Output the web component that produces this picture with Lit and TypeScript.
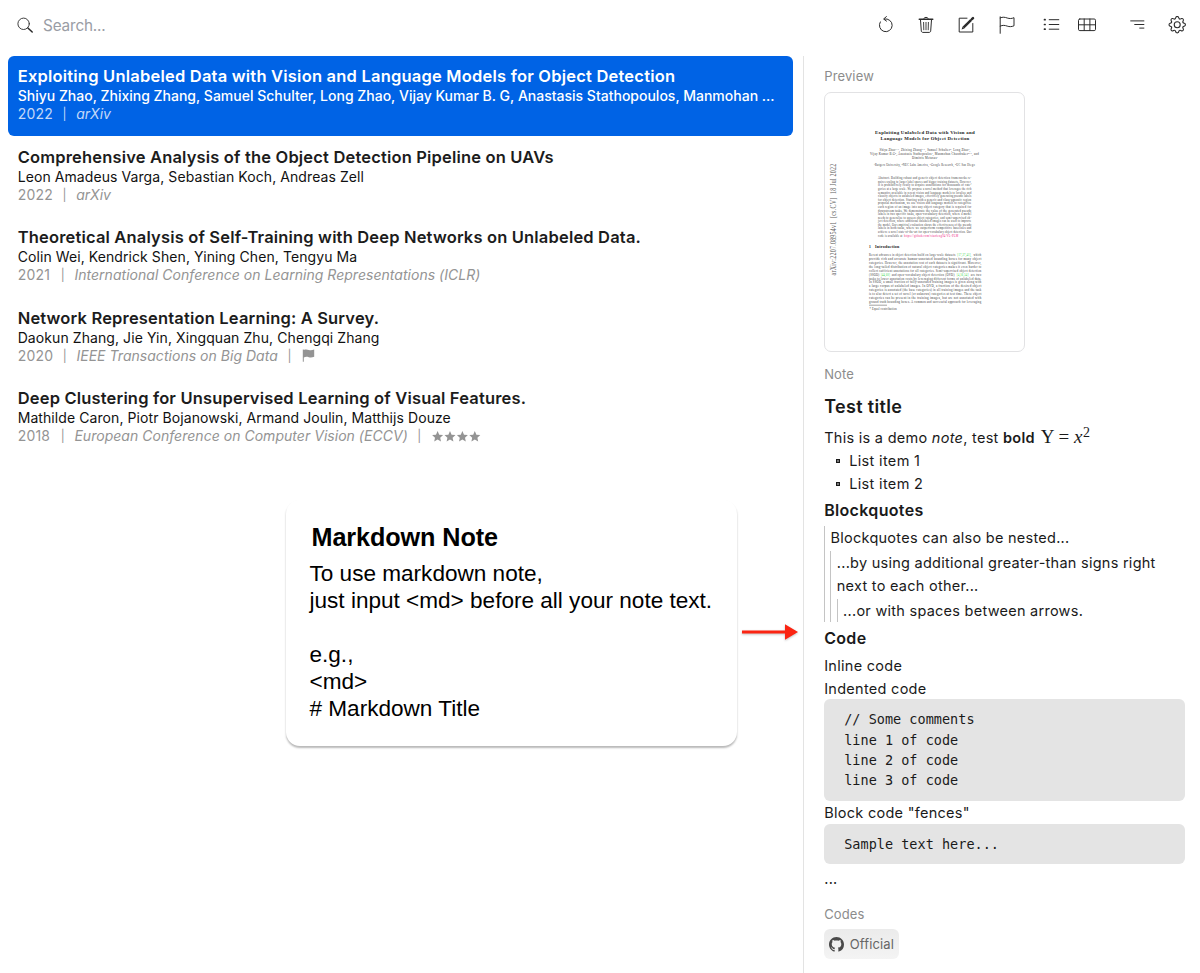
import { LitElement, html, css, svg, nothing } from "lit";
import { customElement, property } from "lit/decorators.js";
import { classMap } from "lit/directives/class-map.js";

interface Paper {
  title: string;
  authors: string;
  year: string;
  venue: string;
  flag?: boolean;
  stars?: number;
  selected?: boolean;
}

const papers: Paper[] = [
  {
    title: "Exploiting Unlabeled Data with Vision and Language Models for Object Detection",
    authors: "Shiyu Zhao, Zhixing Zhang, Samuel Schulter, Long Zhao, Vijay Kumar B. G, Anastasis Stathopoulos, Manmohan ...",
    year: "2022",
    venue: "arXiv",
    selected: true,
  },
  {
    title: "Comprehensive Analysis of the Object Detection Pipeline on UAVs",
    authors: "Leon Amadeus Varga, Sebastian Koch, Andreas Zell",
    year: "2022",
    venue: "arXiv",
  },
  {
    title: "Theoretical Analysis of Self-Training with Deep Networks on Unlabeled Data.",
    authors: "Colin Wei, Kendrick Shen, Yining Chen, Tengyu Ma",
    year: "2021",
    venue: "International Conference on Learning Representations (ICLR)",
  },
  {
    title: "Network Representation Learning: A Survey.",
    authors: "Daokun Zhang, Jie Yin, Xingquan Zhu, Chengqi Zhang",
    year: "2020",
    venue: "IEEE Transactions on Big Data",
    flag: true,
  },
  {
    title: "Deep Clustering for Unsupervised Learning of Visual Features.",
    authors: "Mathilde Caron, Piotr Bojanowski, Armand Joulin, Matthijs Douze",
    year: "2018",
    venue: "European Conference on Computer Vision (ECCV)",
    stars: 4,
  },
];

/* Each drawing lives in a 20x20 box, centred on (10, 10). */
const icons: Record<string, unknown> = {
  refresh: svg`<path d="M8.400 4a6.400 6.400 0 1 1-4.100 2.900"/><path d="M10.400 1.600 7.600 4l2.900 2.100" />`,
  trash: svg`<path d="M3.300 4.200h13.400" stroke-width="1.600"/><path d="M7.800 3.400c0-1.500 4.400-1.500 4.400 0"/><path d="M4.500 5l.8 10.900c.1 1 .7 1.500 1.600 1.500h6.200c.9 0 1.500-.5 1.600-1.500L15.500 5"/><path d="M7.600 7.400l.2 7.400M10 7.400v7.400M12.400 7.400l-.2 7.400" stroke-width=".9"/>`,
  edit: svg`<path d="M11 3.200H3.200v13.800h13.600V8.500"/><path d="M7.400 12.600 15.200 4.900" stroke-width="2.500" stroke-linecap="butt"/><path d="M15.900 4.200l1.100-1.100" stroke-width="2.500"/><path d="M5.600 14.500l.9-2.700 1.800 1.800z" fill="currentColor" stroke="none"/>`,
  flag: svg`<path d="M3.200 1.800v16.500M3.200 2.900c2.600-1.200 4.700-.7 7 .1 2.400.8 4.500.7 6.800-.3v8.100c-2.400 1-4.500 1.100-6.800.3-2.300-.8-4.400-1.200-7 0"/>`,
  list: svg`<path d="M8.200 4.700h9.600M8.200 9.500h9.600M8.200 14.200h9.600"/><path d="M3.500 4.700h.6M3.500 9.500h.6M3.500 14.200h.6" stroke-width="1.700"/>`,
  table: svg`<rect x="1.500" y="4" width="17" height="11.600" rx="1.300"/><path d="M1.500 9.800h17M7.200 4v11.600M12.900 4v11.600"/>`,
  filter: svg`<path d="M3.700 5.900h13.200M7.700 9.500h9.200M12.700 13.100h4.200"/>`,
  gear: svg`<g transform="translate(1.500 1) scale(1.090)" fill="currentColor" stroke="none"><path d="M8 4.754a3.246 3.246 0 1 0 0 6.492 3.246 3.246 0 0 0 0-6.492zM5.754 8a2.246 2.246 0 1 1 4.492 0 2.246 2.246 0 0 1-4.492 0z"/><path d="M9.796 1.343c-.527-1.79-3.065-1.79-3.592 0l-.094.319a.873.873 0 0 1-1.255.52l-.292-.16c-1.64-.892-3.433.902-2.54 2.541l.159.292a.873.873 0 0 1-.52 1.255l-.319.094c-1.79.527-1.79 3.065 0 3.592l.319.094a.873.873 0 0 1 .52 1.255l-.16.292c-.892 1.64.901 3.434 2.541 2.54l.292-.159a.873.873 0 0 1 1.255.52l.094.319c.527 1.79 3.065 1.79 3.592 0l.094-.319a.873.873 0 0 1 1.255-.52l.292.16c1.64.893 3.434-.902 2.54-2.541l-.159-.292a.873.873 0 0 1 .52-1.255l.319-.094c1.79-.527 1.79-3.065 0-3.592l-.319-.094a.873.873 0 0 1-.52-1.255l.16-.292c.893-1.64-.902-3.433-2.541-2.54l-.292.159a.873.873 0 0 1-1.255-.52l-.094-.319zm-2.633.283c.246-.835 1.428-.835 1.674 0l.094.319a1.873 1.873 0 0 0 2.693 1.115l.291-.16c.764-.415 1.6.42 1.184 1.185l-.159.292a1.873 1.873 0 0 0 1.116 2.692l.318.094c.835.246.835 1.428 0 1.674l-.319.094a1.873 1.873 0 0 0-1.115 2.693l.16.291c.415.764-.42 1.6-1.185 1.184l-.291-.159a1.873 1.873 0 0 0-2.693 1.116l-.094.318c-.246.835-1.428.835-1.674 0l-.094-.319a1.873 1.873 0 0 0-2.692-1.115l-.292.16c-.764.415-1.6-.42-1.184-1.185l.159-.291A1.873 1.873 0 0 0 1.945 8.93l-.319-.094c-.835-.246-.835-1.428 0-1.674l.319-.094A1.873 1.873 0 0 0 3.06 4.377l-.16-.292c-.415-.764.42-1.6 1.185-1.184l.292.159a1.873 1.873 0 0 0 2.692-1.115l.094-.319z"/></g>`,
};

const githubMark =
  "M8 0C3.58 0 0 3.58 0 8c0 3.54 2.29 6.53 5.47 7.59.4.07.55-.17.55-.38 0-.19-.01-.82-.01-1.49-2.01.37-2.53-.49-2.69-.94-.09-.23-.48-.94-.82-1.13-.28-.15-.68-.52-.01-.53.63-.01 1.08.58 1.23.82.72 1.21 1.87.87 2.33.66.07-.52.28-.87.51-1.07-1.78-.2-3.64-.89-3.64-3.95 0-.87.31-1.59.82-2.15-.08-.2-.36-1.02.08-2.12 0 0 .67-.21 2.2.82.64-.18 1.32-.27 2-.27.68 0 1.36.09 2 .27 1.53-1.04 2.2-.82 2.2-.82.44 1.1.16 1.92.08 2.12.51.56.82 1.27.82 2.15 0 3.07-1.87 3.75-3.65 3.95.29.25.54.73.54 1.48 0 1.07-.01 1.93-.01 2.2 0 .21.15.46.55.38A8.012 8.012 0 0 0 16 8c0-4.42-3.58-8-8-8z";

@customElement("tool-icon")
export class ToolIcon extends LitElement {
  static styles = css`
    :host { display: block; width: 20px; height: 20px; color: #2c2c2c; }
    .glyph { display: block; width: 20px; height: 20px; overflow: visible; }
  `;
  @property() name = "";
  render() {
    return html`<svg class="glyph" viewBox="0 0 20 20" fill="none" stroke="currentColor" stroke-width="1" stroke-linecap="round" stroke-linejoin="round">${icons[this.name]}</svg>`;
  }
}

@customElement("paper-row")
export class PaperRow extends LitElement {
  static styles = css`
    :host { display: block; }
    .row { box-sizing: border-box; height: 79.4px; padding: 9.5px 10px 0 9.7px; border-radius: 6px; color: #111; white-space: nowrap; }
    .title { font-size: 16.5px; font-weight: 600; line-height: 22px; letter-spacing: 0.17px; color: #1c1c1c; }
    .authors { font-size: 14px; line-height: 18px; letter-spacing: 0.08px; }
    .meta { display: flex; align-items: center; gap: 9.6px; font-size: 14px; line-height: 18px; letter-spacing: 0.03px; color: #949494; }
    .year { letter-spacing: 0.2px; min-width: 33.5px; }
    .venue { font-style: italic; }
    .sep { width: 4px; font-size: 12px; text-align: center; }
    .selected { background: #0063e5; color: #fff; height: 80px; margin: -0.5px 0 -0.1px; padding-top: 9.4px; }
    .selected .title { color: #fff; letter-spacing: 0.21px; }
    .selected .authors { font-weight: 500; letter-spacing: 0; }
    .selected .meta { color: #c3d8f8; }
    .mark { display: block; height: 13px; fill: #949494; margin-left: 0.8px; }
  `;
  @property({ attribute: false }) paper!: Paper;

  private stars(n: number) {
    return html`<svg class="mark" width=${n * 12.4} height="13" viewBox="0 0 ${n * 12.4} 13">
      ${Array.from({ length: n }, (_, i) => svg`<path transform="translate(${i * 12.4} 0.8)" d="M5.600.3l1.600 3.600 3.900.4-2.900 2.600.8 3.900-3.400-2-3.400 2 .8-3.900L.1 4.300l3.900-.4z"/>`)}
    </svg>`;
  }

  render() {
    const p = this.paper;
    const bar = html`<span class="sep">|</span>`;
    return html`<div class=${classMap({ row: true, selected: !!p.selected })}>
      <div class="title">${p.title}</div>
      <div class="authors">${p.authors}</div>
      <div class="meta">
        <span class="year">${p.year}</span>${bar}<span class="venue">${p.venue}</span>
        ${p.flag ? html`${bar}<svg class="mark" width="13" height="13" viewBox="0 0 13 13"><path d="M.8.6h1v.5c1.900-.8 3.300-.5 5 0 1.900.5 3.300.3 5.400-.5v7.200c-2 .8-3.700.9-5.400.4-1.700-.4-3.200-.6-5 .2v4.400h-1z"/></svg>` : nothing}
        ${p.stars ? html`${bar}${this.stars(p.stars)}` : nothing}
      </div>
    </div>`;
  }
}

/* A page line is a run of segments: text, x, width and an optional fill. */
type Segment = [text: string, x: number, width: number, fill?: string];
const GREEN = "#0fd22c";
const PINK = "#ee1c80";

const full = (t: string, x: number, w: number): Segment[] => [[t, x, w]];

const abstractLines: Segment[][] = [
  "Abstract. Building robust and generic object detection frameworks re-",
  "quires scaling to larger label spaces and bigger training datasets. However,",
  "it is prohibitively costly to acquire annotations for thousands of cate-",
  "gories at a large scale. We propose a novel method that leverages the rich",
  "semantics available in recent vision and language models to localize and",
  "classify objects in unlabeled images, effectively generating pseudo labels",
  "for object detection. Starting with a generic and class-agnostic region",
  "proposal mechanism, we use vision and language models to categorize",
  "each region of an image into any object category that is required for",
  "downstream tasks. We demonstrate the value of the generated pseudo",
  "labels in two specific tasks, open-vocabulary detection, where a model",
  "needs to generalize to unseen object categories, and semi-supervised ob-",
  "ject detection, where additional unlabeled images can be used to improve",
  "the model. Our empirical evaluation shows the effectiveness of the pseudo",
  "labels in both tasks, where we outperform competitive baselines and",
  "achieve a novel state-of-the-art for open-vocabulary object detection. Our",
].map((t) => full(t, 878.5, 93.5));
abstractLines.push([["code is available at", 878.5, 24.5], ["https://github.com/xiaofeng94/VL-PLM", 904.5, 54.5, PINK]]);

const introLines: Segment[][] = [
  [["Recent advances in object detection build on large-scale datasets", 869.5, 86.5], ["[17,27,41],", 957.8, 14.2, GREEN], ["which", 974, 8]],
  full("provide rich and accurate human-annotated bounding boxes for many object", 869.5, 112.5),
  full("categories. However, the annotation cost of such datasets is significant. Moreover,", 869.5, 112.5),
  full("the long-tailed distribution of natural object categories makes it even harder to", 869.5, 112.5),
  full("collect sufficient annotations for all categories. Semi-supervised object detection", 869.5, 112.5),
  [["(SSOD)", 869.5, 10.5], ["[44,60]", 881.5, 9, GREEN], ["and open-vocabulary object detection (OVD)", 892.2, 63], ["[4,16,54]", 957.3, 11.7, GREEN], ["are two", 971.3, 10.7]],
  full("tasks to lower annotation costs by leveraging different forms of unlabeled data.", 869.5, 112.5),
  full("In SSOD, a small fraction of fully-annotated training images is given along with", 869.5, 112.5),
  full("a large corpus of unlabeled images. In OVD, a fraction of the desired object", 869.5, 112.5),
  full("categories is annotated (the base categories) in all training images and the task", 869.5, 112.5),
  full("is to also detect a set of novel (or unknown) categories at test time. These object", 869.5, 112.5),
  full("categories can be present in the training images, but are not annotated with", 869.5, 112.5),
  full("ground truth bounding boxes. A common and successful approach for leveraging", 869.5, 112.5),
];

@customElement("page-preview")
export class PagePreview extends LitElement {
  static styles = css`
    :host { display: block; box-sizing: border-box; width: 201px; height: 260.5px; border: 1px solid #e2e2e4; border-radius: 7px; overflow: hidden; background: #fff; }
    .page { display: block; font-family: "Liberation Serif", serif; fill: #333; }
    .head { font-weight: bold; font-size: 4.9px; fill: #1a1a1a; }
    .by { font-size: 3.4px; }
    .small { font-size: 3.1px; }
    .body { font-size: 3.4px; }
    .cite { font-size: 3px; }
    .stamp { font-size: 7.2px; fill: #5c5c5c; }
  `;
  private text(content: string, x: number, y: number, w: number, cls: string, fill?: string) {
    return svg`<text class=${cls} x=${x} y=${y} textLength=${w} lengthAdjust="spacingAndGlyphs" fill=${fill ?? "#333"}>${content}</text>`;
  }
  private lines(rows: Segment[][], top: number, pitch: number) {
    return rows.map((row, i) => row.map(([t, x, w, fill]) => this.text(t, x, top + i * pitch, w, fill ? "cite" : "body", fill)));
  }
  render() {
    return html`<svg class="page" width="199" height="258.5" viewBox="825.500 93 199 258.500">
      ${this.text("Exploiting Unlabeled Data with Vision and", 875.5, 133.8, 100, "head")}
      ${this.text("Language Models for Object Detection", 881, 139.8, 89, "head")}
      ${this.text("Shiyu Zhao¹·¹, Zhixing Zhang¹·¹, Samuel Schulter², Long Zhao³,", 880, 150.8, 91, "by")}
      ${this.text("Vijay Kumar B.G², Anastasis Stathopoulos¹, Manmohan Chandraker²·⁴, and", 870.5, 154.8, 109, "by")}
      ${this.text("Dimitris Metaxas¹", 912.5, 158.8, 26, "by")}
      ${this.text("¹Rutgers University, ²NEC Labs America, ³Google Research, ⁴UC San Diego", 874.5, 166, 101, "small")}
      ${this.lines(abstractLines, 179.3, 3.58)}
      ${this.text("1", 869.5, 248.2, 2, "head")}
      ${this.text("Introduction", 875.5, 248.2, 24.5, "head")}
      ${this.lines(introLines, 255.9, 3.94)}
      <path d="M869.500 305.200h18" stroke="#444" stroke-width=".5"/>
      ${this.text("* Equal contribution", 870, 309.5, 27.5, "small")}
      <text class="stamp" transform="translate(836.300 275.500) rotate(-90)" textLength="112" lengthAdjust="spacingAndGlyphs" xml:space="preserve">arXiv:2207.08954v1  [cs.CV]  18 Jul 2022</text>
    </svg>`;
  }
}

@customElement("detail-panel")
export class DetailPanel extends LitElement {
  static styles = css`
    :host { display: block; box-sizing: border-box; padding: 12px 15.5px 0 20.2px; border-left: 1px solid #e3e3e3; font-size: 14.5px; line-height: 23px; letter-spacing: 0.28px; color: #1a1a1a; }
    .label { font-size: 13px; line-height: 16px; letter-spacing: 0.14px; color: #8c8c8c; }
    .preview { margin: 7.5px 0 0 -0.4px; }
    .note-label { margin-top: 14px; }
    .h1 { margin: 10.5px 0 5.3px; font-size: 18px; line-height: 28px; font-weight: 600; letter-spacing: 0.33px; }
    .h2 { margin: 4px 0 4.5px; font-size: 16px; line-height: 22px; font-weight: 600; letter-spacing: 0.32px; }
    .h2.code { margin: 5.4px 0 4.8px; }
    .para { height: 23px; white-space: nowrap; }
    .para.tight { height: 22.8px; }
    .para b { font-weight: 600; }
    .math { margin-left: 6px; font: 19px/1 "Liberation Serif", serif; letter-spacing: 0; }
    .math sup { font-size: 14px; line-height: 0; vertical-align: 6px; margin-left: 0.5px; }
    .item { display: flex; align-items: center; padding-left: 11.5px; gap: 9.5px; letter-spacing: 0.34px; }
    .box { width: 2px; height: 2px; margin-top: 2px; border: 1.5px solid #1a1a1a; background: #777; }
    .quote { margin-top: 2px; padding-left: 5.3px; border-left: 1px solid #c4c4c4; letter-spacing: 0.26px; }
    .quote.outer { margin-top: 4.8px; padding-top: 0.3px; }
    .pre { margin: 0; padding: 10px 20px; border-radius: 6px; background: #e4e4e4; font: 13.5px/20.3px "DejaVu Sans Mono", monospace; letter-spacing: 0.02px; }
    .first { margin: -0.2px 0 0.8px; }
    .second { margin-top: -0.7px; }
    .dots { margin-top: 3.6px; }
    .codes { margin-top: 15.6px; }
    .official { display: flex; align-items: center; gap: 5.5px; box-sizing: border-box; width: 75px; height: 30px; margin-top: 6.5px; padding: 1px 0 0 5px; border-radius: 6px; background: linear-gradient(#ebebeb, #f4f4f4); font-size: 13px; letter-spacing: 0.15px; color: #666; }
    .official svg { display: block; fill: #4a4a4a; }
  `;
  render() {
    return html`
      <div class="label">Preview</div>
      <page-preview class="preview"></page-preview>
      <div class="label note-label">Note</div>
      <div class="h1">Test title</div>
      <div class="para">This is a demo <i>note</i>, test <b>bold</b><span class="math">Y = <i>x</i><sup>2</sup></span></div>
      <div class="item"><span class="box"></span>List item 1</div>
      <div class="item"><span class="box"></span>List item 2</div>
      <div class="h2">Blockquotes</div>
      <div class="quote outer">Blockquotes can also be nested...
        <div class="quote">...by using additional greater-than signs right next to each other...
          <div class="quote">...or with spaces between arrows.</div>
        </div>
      </div>
      <div class="h2 code">Code</div>
      <div class="para tight">Inline code</div>
      <div class="para tight">Indented code</div>
      <pre class="pre first">// Some comments
line 1 of code
line 2 of code
line 3 of code</pre>
      <div class="para tight">Block code "fences"</div>
      <pre class="pre second">Sample text here...</pre>
      <div class="para dots">...</div>
      <div class="label codes">Codes</div>
      <div class="official"><svg width="15" height="15" viewBox="0 0 16 16"><path d=${githubMark} /></svg>Official</div>
    `;
  }
}

@customElement("app-root")
export class AppRoot extends LitElement {
  static styles = css`
    :host { display: flex; flex-direction: column; width: 100%; height: 973px; overflow: hidden; background: #fff; font-family: Inter, sans-serif; }
    .bar { display: flex; align-items: center; justify-content: space-between; box-sizing: border-box; flex: none; height: 56px; padding: 0 13px 7px 17px; }
    .search { display: flex; align-items: center; gap: 9px; font-size: 15.3px; line-height: 20px; letter-spacing: -0.15px; color: #9a9da5; padding-top: 2px; }
    .search svg { display: block; }
    .tools { display: flex; align-items: center; gap: 20.3px; }
    .views { display: flex; gap: 15.5px; margin: 0 9.7px 0 4.2px; }
    .main { display: grid; grid-template-columns: 803px 1fr; flex: 1; min-height: 0; }
    .left { padding-left: 8px; }
    .rows { display: flex; flex-direction: column; gap: 1px; width: 785px; }
    .callout { display: flex; align-items: flex-start; margin: 43.5px 0 0 278px; }
    .card { box-sizing: border-box; width: 451px; height: 246px; padding: 21px 23.5px; border-radius: 14px; background: #fff; box-shadow: 0 2px 2px rgba(0, 0, 0, 0.28); font: 22.57px/27px "Liberation Sans", Arial, sans-serif; color: #000; white-space: nowrap; }
    .card-title { margin: 0 0 7px 2px; font-size: 25.2px; line-height: 32px; font-weight: 700; letter-spacing: -0.08px; }
    .text { white-space: pre; }
    .arrow { display: block; margin: 123.5px 0 0 4.5px; overflow: visible; filter: drop-shadow(0 1px 1px rgba(0, 0, 0, 0.25)); }
  `;
  render() {
    return html`
      <div class="bar">
        <div class="search">
          <svg width="17" height="17" viewBox="0 0 17 17" fill="none" stroke="#2a2a2a" stroke-linecap="round"><circle cx="6.600" cy="6.800" r="5.700" stroke-width=".9"/><path d="M10.900 11l4.300 4" stroke-width="1.500"/></svg>
          <span>Search...</span>
        </div>
        <div class="tools">
          <tool-icon name="refresh"></tool-icon>
          <tool-icon name="trash"></tool-icon>
          <tool-icon name="edit"></tool-icon>
          <tool-icon name="flag"></tool-icon>
          <div class="views">
            <tool-icon name="list"></tool-icon>
            <tool-icon name="table"></tool-icon>
          </div>
          <tool-icon name="filter"></tool-icon>
          <tool-icon name="gear"></tool-icon>
        </div>
      </div>
      <div class="main">
        <div class="left">
          <div class="rows">${papers.map((p) => html`<paper-row .paper=${p}></paper-row>`)}</div>
          <div class="callout">
            <div class="card">
              <div class="card-title">Markdown Note</div>
              <div class="text">${"To use markdown note,\njust input <md> before all your note text.\n\ne.g.,\n<md>\n# Markdown Title"}</div>
            </div>
            <svg class="arrow" width="57" height="16" viewBox="0 0 57 16"><path d="M0 6.500h43V.3l13 7.700-13 7.700V9.500H0z" fill="#fb2412"/></svg>
          </div>
        </div>
        <detail-panel></detail-panel>
      </div>
    `;
  }
}
